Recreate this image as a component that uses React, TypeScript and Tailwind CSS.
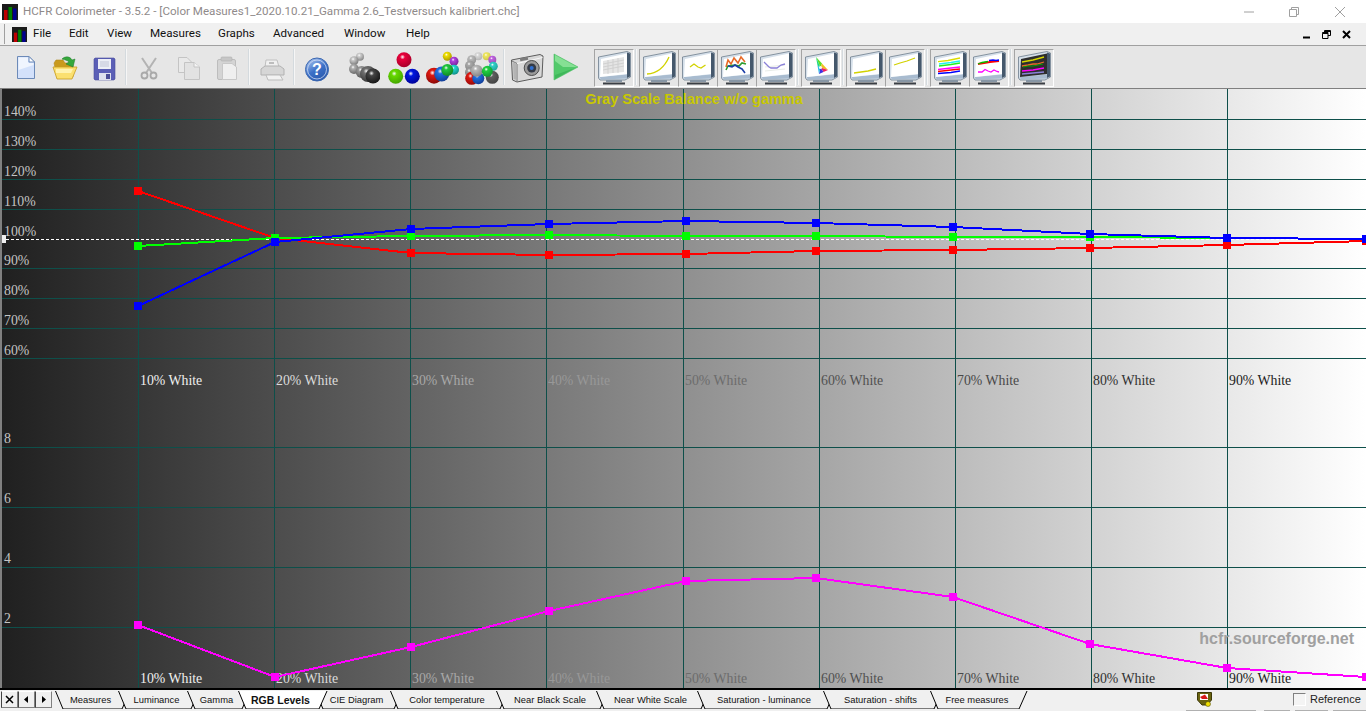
import { useId } from 'react';
import type { ReactNode } from 'react';

const UI_FONT = 'font-["Roboto",sans-serif]';

const menus = [
  { label: 'File', width: 'w-[36px]' },
  { label: 'Edit', width: 'w-[38px]' },
  { label: 'View', width: 'w-[43px]' },
  { label: 'Measures', width: 'w-[68px]' },
  { label: 'Graphs', width: 'w-[55px]' },
  { label: 'Advanced', width: 'w-[71px]' },
  { label: 'Window', width: 'w-[62px]' },
  { label: 'Help', width: 'w-[40px]' },
];

const tabs = [
  { label: 'Measures', width: 'w-[63px]', next: 63 },
  { label: 'Luminance', width: 'w-[69px]', next: 69 },
  { label: 'Gamma', width: 'w-[51px]', next: 51 },
  { label: 'RGB Levels', width: 'w-[77px]', next: 77, active: true },
  { label: 'CIE Diagram', width: 'w-[75px]', next: 75 },
  { label: 'Color temperature', width: 'w-[106px]', next: 106 },
  { label: 'Near Black Scale', width: 'w-[100px]', next: 100 },
  { label: 'Near White Scale', width: 'w-[101px]', next: 101 },
  { label: 'Saturation - luminance', width: 'w-[126px]', next: 126 },
  { label: 'Saturation - shifts', width: 'w-[107px]', next: 107 },
  { label: 'Free measures', width: 'w-[90px]', next: 90, last: true },
];

const gridX = [138, 274, 410, 546, 683, 819, 955, 1091, 1227];
const gridY = [119, 149, 179, 209, 268, 298, 328, 358, 447, 507, 567, 627];
const percent = ['140%', '130%', '120%', '110%', '100%', '90%', '80%', '70%', '60%'];
const percentY = [116, 146, 176, 206, 236, 265, 295, 325, 355];
const whiteColors = ['#f0f0f0', '#dcdcdc', '#a8a8a8', '#989898', '#6c6c6c', '#505050', '#484848', '#303030', '#202020'];
const pointX = [138, 275, 411, 549, 686, 816, 953, 1090, 1227, 1366];

const series = [
  { color: '#ff0000', y: [191, 238, 253, 255, 254, 251, 250, 248, 245, 241] },
  { color: '#00ff00', y: [246, 238, 236, 235, 236, 236, 237, 237, 238, 239] },
  { color: '#0000ff', y: [306, 242, 229, 224, 221, 223, 227, 234, 238, 239] },
  { color: '#ff00ff', y: [625, 677, 647, 611, 581, 578, 597, 644, 668, 677] },
];

function Ball({ x, y, r, color, dark }: { x: number; y: number; r: number; color: string; dark: string }) {
  const id = useId();
  return (
    <>
      <defs>
        <radialGradient id={id} cx="0.4" cy="0.32" r="0.75">
          <stop offset="0" stopColor="#ffffff" stopOpacity="0.9" />
          <stop offset="0.22" stopColor={color} />
          <stop offset="1" stopColor={dark} />
        </radialGradient>
      </defs>
      <circle cx={x} cy={y} r={r} fill={`url(#${id})`} />
    </>
  );
}

const Icon = ({ children }: { children: ReactNode }) => (
  <svg width="36" height="36" viewBox="0 0 36 36" className="block">
    {children}
  </svg>
);

const AppLogo = ({ size }: { size: number }) => (
  <svg width={size} height={size} viewBox="0 0 16 16" className="shrink-0">
    <rect width="16" height="16" fill="#1a1a1a" />
    <rect x="2" y="6" width="3.5" height="10" fill="#c00000" />
    <rect x="6.5" y="3" width="3.5" height="13" fill="#008000" />
    <rect x="11" y="4.5" width="3.5" height="11.5" fill="#000090" />
  </svg>
);

const NewIcon = () => (
  <Icon>
    <path d="M9.5 6.5H21L26.5 12V28.5H9.5Z" fill="#d3e1fb" stroke="#6c8ab8" />
    <path d="M10.5 7.5H20L20 13H25.5V15L10.5 20Z" fill="#f0f5fe" />
    <path d="M21 6.5V12H26.5Z" fill="#ffffff" stroke="#6c8ab8" />
  </Icon>
);

const OpenIcon = () => (
  <Icon>
    <path d="M7 13L9 10H16L18 13H26V27H10Z" fill="#c99a1c" stroke="#b08a20" strokeWidth="0.6" />
    <path d="M6 17H25L30 17L25 29H10Z" fill="#fbe070" stroke="#c89c20" strokeWidth="0.8" />
    <path d="M9 19H26L24 23H9Z" fill="#fff3b0" />
    <path d="M15 9C18 6 23 6 25 10L28 9L26 17L19 14L22 12C20 10 18 10 15 9Z" fill="#35a83c" stroke="#1d7a2a" strokeWidth="0.5" />
  </Icon>
);

const SaveIcon = () => (
  <Icon>
    <path d="M8 9L9 8H28L29 9V29L28 30H9L8 29Z" fill="#5b5fb6" stroke="#4a4e9e" strokeWidth="0.6" />
    <rect x="12" y="9" width="13" height="10" fill="#eceef6" />
    <path d="M14 12H23M14 14H23M14 16H23" stroke="#b6b9cf" strokeWidth="0.8" />
    <rect x="13" y="23" width="12" height="7" fill="#dfe2ee" />
    <rect x="20" y="24" width="4" height="5" fill="#4c4f96" />
  </Icon>
);

const CutIcon = () => (
  <Icon>
    <path d="M11 8L21 23M25 8L15 23" stroke="#b3b3b3" strokeWidth="2" fill="none" />
    <circle cx="13.5" cy="25.5" r="3" fill="none" stroke="#a9a9a9" strokeWidth="1.8" />
    <circle cx="22.5" cy="25.5" r="3" fill="none" stroke="#a9a9a9" strokeWidth="1.8" />
  </Icon>
);

const CopyIcon = () => (
  <Icon>
    <path d="M8.5 7.5H17L21.5 12V22.5H8.5Z" fill="#e9e9e9" stroke="#c4c4c4" />
    <path d="M14.5 12.5H24L29.5 17V29.5H14.5Z" fill="#e2e2e2" stroke="#c4c4c4" />
    <path d="M24 12.5V17H29.5" fill="#f4f4f4" stroke="#c4c4c4" />
  </Icon>
);

const PasteIcon = () => (
  <Icon>
    <rect x="8.5" y="9.5" width="18" height="20" rx="1.5" fill="#d4d4d4" stroke="#bdbdbd" />
    <rect x="12" y="7" width="11" height="4" rx="1" fill="#c6c6c6" stroke="#b0b0b0" strokeWidth="0.6" />
    <path d="M13.5 13.5H23L27.5 17V29.5H13.5Z" fill="#efefef" stroke="#c8c8c8" />
  </Icon>
);

const PrintIcon = () => (
  <Icon>
    <path d="M12 10H23L25 17H11Z" fill="#f0f0f0" stroke="#c0c0c0" />
    <path d="M7 19L11 16H26L30 19V25H7Z" fill="#d6d6d6" stroke="#b2b2b2" />
    <path d="M12 25H26L29 30H14Z" fill="#f2f2f2" stroke="#bcbcbc" />
    <rect x="15" y="12" width="5" height="2" fill="#bdbdbd" />
  </Icon>
);

const HelpIcon = () => {
  const id = useId();
  return (
    <Icon>
      <defs>
        <linearGradient id={id} x1="0.2" y1="0" x2="0.8" y2="1">
          <stop offset="0" stopColor="#a9c4ee" />
          <stop offset="0.5" stopColor="#3b70c8" />
          <stop offset="1" stopColor="#2856a8" />
        </linearGradient>
      </defs>
      <circle cx="18" cy="19.5" r="11.5" fill={`url(#${id})`} stroke="#3d68b0" />
      <circle cx="18" cy="19.5" r="9.5" fill="none" stroke="#cfdcf4" strokeWidth="0.8" />
      <text x="18" y="25" textAnchor="middle" fontSize="16" fontWeight="700" fill="#ffffff" fontFamily="Liberation Sans, sans-serif">
        ?
      </text>
    </Icon>
  );
};

const GrayChain = () => (
  <Icon>
    <Ball x={16} y={6.7} r={4} color="#d0d0d0" dark="#808080" />
    <Ball x={10} y={10.7} r={4.5} color="#c8c8c8" dark="#707070" />
    <Ball x={10} y={19} r={5} color="#b0b0b0" dark="#606060" />
    <Ball x={17.7} y={22} r={6} color="#999999" dark="#505050" />
    <Ball x={24} y={24} r={8} color="#707070" dark="#303030" />
    <Ball x={29} y={26} r={7.5} color="#444444" dark="#111111" />
  </Icon>
);

const RgbBalls = () => (
  <Icon>
    <Ball x={18} y={9.7} r={7.5} color="#e8003a" dark="#a00028" />
    <Ball x={9.7} y={26.3} r={7.5} color="#66d800" dark="#40a000" />
    <Ball x={26.3} y={26.3} r={7.5} color="#0018e0" dark="#000090" />
  </Icon>
);

const ColorChain = () => (
  <Icon>
    <Ball x={22.3} y={6.3} r={4.5} color="#f0e000" dark="#a09000" />
    <Ball x={29} y={11.3} r={4.5} color="#b040e0" dark="#702090" />
    <Ball x={29} y={19.7} r={5} color="#20d8d0" dark="#108880" />
    <Ball x={9} y={25.7} r={8} color="#e01810" dark="#800808" />
    <Ball x={16.7} y={24} r={7.5} color="#2070e0" dark="#103890" />
    <Ball x={22.3} y={20} r={6} color="#20c840" dark="#108020" />
  </Icon>
);

const RingBalls = () => (
  <Icon>
    <Ball x={14.3} y={6.3} r={4} color="#d8d8d8" dark="#b0b0b0" />
    <Ball x={22.7} y={6.3} r={4} color="#f0e860" dark="#c8c050" />
    <Ball x={28.3} y={9.7} r={4} color="#c060e0" dark="#9050b0" />
    <Ball x={29.3} y={16.3} r={4.5} color="#30d0c8" dark="#20a098" />
    <Ball x={7.7} y={9.7} r={4.5} color="#b8b8b8" dark="#909090" />
    <Ball x={6} y={15.7} r={5} color="#a8a8a8" dark="#808080" />
    <Ball x={6} y={22.3} r={5} color="#a0a0a0" dark="#707070" />
    <Ball x={7.7} y={28.3} r={6.5} color="#e01810" dark="#900808" />
    <Ball x={28.3} y={27.3} r={6.5} color="#606060" dark="#404040" />
    <Ball x={14.3} y={28.3} r={6} color="#2070e0" dark="#103890" />
    <Ball x={12.7} y={20.7} r={6} color="#b8b8b8" dark="#808080" />
    <Ball x={23.3} y={21.3} r={5.5} color="#20d040" dark="#109030" />
  </Icon>
);

const CameraIcon = () => (
  <Icon>
    <path d="M2.5 10L31 4.5L34 6L33 27L8 32L3.5 30Z" fill="#d8d8d8" stroke="#5c5c5c" />
    <path d="M3 11L8 13.5V31.5" fill="none" stroke="#7a7a7a" />
    <path d="M8 13.5L33.5 7.5" stroke="#f8f8f8" />
    <path d="M4 12L7.5 14V30L4.5 29Z" fill="#b4b4b4" />
    <rect x="11" y="7.5" width="8" height="3" fill="#7c7c7c" transform="rotate(-12 15 9)" />
    <circle cx="22.7" cy="18" r="7.5" fill="#9a9a9a" stroke="#4c4c4c" />
    <circle cx="22.7" cy="18" r="4.5" fill="#343a46" />
    <circle cx="22.7" cy="18" r="2" fill="#2f6fd0" />
  </Icon>
);

const PlayIcon = () => (
  <Icon>
    <path d="M5 4L29 17L5 30Z" fill="#52c96a" stroke="#4cbd64" strokeWidth="0.6" />
    <path d="M6 5L28 17H14L6 11Z" fill="#86e094" />
    <path d="M6 25L26 18L6 29Z" fill="#3fb75a" />
  </Icon>
);

const Monitor = ({ children, dark }: { children?: ReactNode; dark?: boolean }) => (
  <svg width="38" height="38" viewBox="0 0 38 38" className="block">
    <path d="M3.5 8L32 2.5L35.5 4V28L30 31H5L3.5 29Z" fill="#d6e0ea" stroke="#6d7d8d" strokeWidth="0.8" />
    <path d="M32 3.5L35 4.5V27.5L32 29Z" fill="#45586c" />
    <path d="M4.5 28L32 25.5V29.5L6 30.5Z" fill="#a8bbcf" />
    <path d="M11 31H27V33H11Z" fill="#8796a5" />
    <path d="M8 33.5H30V35.5H8Z" fill="#3b3f44" />
    <path d="M6 10L32 4.5V25L5 28Z" fill={dark ? '#2e2e2e' : '#ffffff'} />
    {children}
  </svg>
);

const Line = ({ d, c, w = 1.3 }: { d: string; c: string; w?: number }) => (
  <path d={d} stroke={c} strokeWidth={w} fill="none" />
);

const monitorContent: ReactNode[] = [
  <>
    <path d="M8 12L29 8V23L8 25Z" fill="#e4e4e4" />
    <path d="M8 15L29 11M8 18L29 14M8 21L29 17M13 11V25M18 10V24M23 9V24" stroke="#c8c8c8" strokeWidth="0.7" />
  </>,
  <Line d="M7 25Q22 24 29 8" c="#d2d200" />,
  <Line d="M11 18L15 15L19 18L22 19L26.5 16" c="#d2d200" />,
  <>
    <Line d="M8 18L10 11L13 15L16 9L20 14L23 8L27 13" c="#e86a28" w={1.6} />
    <Line d="M8 21L10 17L17 16L21 17L24 14L28 15" c="#2f9a30" w={1.6} />
    <Line d="M10 17L14 18L17 16L20 18L24 20L27 24" c="#1d3fa8" w={1.6} />
  </>,
  <>
    <path d="M8 22L28 20M8 18L28 16" stroke="#dce2dc" strokeWidth="0.7" />
    <Line d="M7 13L12 18L14 19L20 19L24 16L28 15" c="#8a80d8" />
  </>,
  <>
    <path d="M14 8L20 14.5L18.5 18.5Z" fill="#60e020" />
    <path d="M20 14.5L26 21L18.5 18.5Z" fill="#f0c020" />
    <path d="M26 21L21.5 23L18.5 18.5Z" fill="#f02060" />
    <path d="M21.5 23L17 25L18.5 18.5Z" fill="#4030e0" />
    <path d="M17 25L15.5 16.5L18.5 18.5Z" fill="#20b8e8" />
    <path d="M15.5 16.5L14 8L18.5 18.5Z" fill="#20d880" />
    <circle cx="18.5" cy="18.5" r="1.6" fill="#f4f4f4" />
  </>,
  <Line d="M7 24L14 23L21 22L29 20" c="#d2d200" />,
  <Line d="M8 16L14 14L21 12L29 9" c="#d2d200" />,
  <>
    <Line d="M7 12.7L17 11.5L29 9" c="#dcdc00" />
    <Line d="M8 15L20 13.5L29 12" c="#20f0f0" />
    <Line d="M8 17L20 15.5L29 14" c="#20f020" />
    <Line d="M7 20.5L20 19L29 18" c="#ff00ff" />
    <Line d="M7 22.5L20 21L29 20" c="#ff0000" />
    <Line d="M7 24.5L20 23.5L29 22" c="#0000ff" />
  </>,
  <>
    <Line d="M8 15L14 14L20 13L29 12" c="#ff0000" w={2} />
    <Line d="M8 15L12 13.5L15 13L18 12.5" c="#00c000" />
    <Line d="M19 11.5L23 11L26 11.5L29 11" c="#0000ff" />
    <Line d="M8 23L12 23L15 20.5L18 22L21 23L24 21L27 22.5L29 23" c="#ff00ff" />
  </>,
  <>
    <Line d="M7 13L18 11L29 8" c="#d8d800" />
    <Line d="M7 17L13 16L18 15L22 15L29 13" c="#e86a28" />
    <Line d="M8 18L13 17L18 17L23 16L28 15" c="#00a000" w={1} />
    <Line d="M7 22L18 21L29 19" c="#ff00ff" />
    <Line d="M7 25L18 24L29 23" c="#8a80d8" />
  </>,
];

const ToolSep = () => (
  <div className="flex w-[6px] h-[38px] justify-center">
    <div className="w-[2px] h-[36px] bg-[#d4dade] border-r border-[#f6f6f6]" />
  </div>
);

const Tool = ({ children, className = '' }: { children: ReactNode; className?: string }) => (
  <div className={`flex w-[39px] h-[38px] items-center justify-center ${className}`}>{children}</div>
);

const MonitorButton = ({ index, dark }: { index: number; dark?: boolean }) => (
  <div className="flex w-[39px] h-[38px] pr-px">
    <div className="flex flex-1 items-center justify-center border-t border-l border-r border-b border-t-[#a4a4a4] border-l-[#a4a4a4] border-r-white border-b-white">
      <Monitor dark={dark}>{monitorContent[index]}</Monitor>
    </div>
  </div>
);

function Chart() {
  return (
    <div className="relative flex-1 min-h-0 bg-linear-to-r/srgb from-[#202020] to-white border-l-2 border-[#808080]">
      <svg
        width="1366"
        height="599"
        viewBox="0 89 1366 599"
        className="absolute -left-[2px] top-0 block"
        fontFamily="Liberation Serif, serif"
        fontSize="13.8"
      >
        <g shapeRendering="crispEdges" stroke="#0e4f4a" strokeWidth="1">
          {gridX.map(x => (
            <line key={x} x1={x + 0.5} y1={89} x2={x + 0.5} y2={688} />
          ))}
          {gridY.map(y => (
            <line key={y} x1={2} y1={y + 0.5} x2={1366} y2={y + 0.5} />
          ))}
        </g>
        <line x1={6} y1={239.5} x2={1366} y2={239.5} stroke="#ffffff" strokeDasharray="3 2" shapeRendering="crispEdges" />
        <rect x={2} y={235} width={4} height={8} fill="#f0f0f0" />
        {percent.map((p, i) => (
          <text key={p} x={4} y={percentY[i]} fill="#c4c4c4">
            {p}
          </text>
        ))}
        {['8', '6', '4', '2'].map((n, i) => (
          <text key={n} x={4} y={443 + i * 60} fill="#c4c4c4">
            {n}
          </text>
        ))}
        {gridX.map((x, i) => (
          <text key={x} x={x + 2} y={385} fill={whiteColors[i]}>
            {i + 1}0% White
          </text>
        ))}
        {gridX.map((x, i) => (
          <text key={x} x={x + 2} y={683} fill={whiteColors[i]}>
            {i + 1}0% White
          </text>
        ))}
        <text x={694} y={104} textAnchor="middle" fontFamily="Liberation Sans, sans-serif" fontWeight="700" fontSize="14.5" fill="#c8c800">
          Gray Scale Balance w/o gamma
        </text>
        <text x={1354} y={644} textAnchor="end" fontFamily="Liberation Sans, sans-serif" fontWeight="700" fontSize="16" fill="#a0a0a0">
          hcfr.sourceforge.net
        </text>
        {series.map(s => (
          <g key={s.color} shapeRendering="crispEdges">
            <polyline points={s.y.map((y, i) => `${pointX[i]},${y}`).join(' ')} fill="none" stroke={s.color} strokeWidth="2" />
            {s.y.map((y, i) => (
              <rect key={i} x={pointX[i] - 4} y={y - 4} width={8} height={8} fill={s.color} />
            ))}
          </g>
        ))}
      </svg>
    </div>
  );
}

const NavButton = ({ children }: { children: ReactNode }) => (
  <div className="flex w-[17px] h-[17px] items-center justify-center border border-t-white border-l-[#444444] border-r-[#808080] border-b-[#808080] bg-[#f0f0f0]">
    {children}
  </div>
);

const Tab = ({ label, width, next, active, last }: (typeof tabs)[number]) => {
  const bottomRight = last ? next - 1 : next + 4;
  const topRight = last ? next + 7 : next + 12;
  return (
    <div className={`relative h-[18px] shrink-0 ${width} ${active ? 'z-10' : ''}`}>
      <svg width={next + 14} height="19" viewBox={`0 0 ${next + 14} 19`} className="absolute left-0 top-0 block">
        <path d={`M0.5 0L8 17.5H${bottomRight}L${topRight} 0Z`} fill={active ? '#ffffff' : '#f0f0f0'} stroke="none" />
        <path d={`M8 17.5H${bottomRight}`} stroke="#7a7a7a" />
        <path d="M0.5 0L8 18" stroke="#000000" />
        <path d={`M${bottomRight} 18L${topRight} 0`} stroke="#000000" />
      </svg>
      <span
        className={`absolute inset-x-0 top-[2px] pl-[8px] text-center whitespace-nowrap leading-[14px] text-[#111111] ${active ? 'font-bold text-[10.5px]' : 'text-[9.4px]'} ${last ? 'pr-[4px]' : ''}`}
      >
        {label}
      </span>
    </div>
  );
};

export default function App() {
  return (
    <div className={`flex flex-col w-[1366px] h-[711px] overflow-hidden bg-[#f0f0f0] ${UI_FONT}`}>
      {/* title bar */}
      <div className="flex items-center h-[23px] shrink-0 bg-white pl-[2px]">
        <AppLogo size={16} />
        <span className="ml-[5px] text-[11.6px] text-[#8f8a8a] whitespace-nowrap">
          HCFR Colorimeter - 3.5.2 - [Color Measures1_2020.10.21_Gamma 2.6_Testversuch kalibriert.chc]
        </span>
        <div className="ml-auto flex items-center text-[#a0a0a0]">
          <svg width="10" height="10" viewBox="0 0 10 10" className="mr-[35px]">
            <path d="M0 5H10" stroke="#a0a0a0" />
          </svg>
          <svg width="10" height="10" viewBox="0 0 10 10" className="mr-[36px]">
            <path d="M0.5 2.5H7.5V9.5H0.5ZM2.5 2.5V0.5H9.5V7.5H7.5" fill="none" stroke="#a0a0a0" />
          </svg>
          <svg width="10" height="10" viewBox="0 0 10 10" className="mr-[21px]">
            <path d="M0 0L10 10M10 0L0 10" stroke="#a0a0a0" />
          </svg>
        </div>
      </div>

      {/* menu bar */}
      <div className="flex items-center h-[22px] shrink-0 bg-[#f0f0f0] pl-[4px]">
        <div className="w-[2px] h-[20px] border-l border-[#a0a0a0] mr-[6px]" />
        <AppLogo size={15} />
        <span className="w-[6px]" />
        {menus.map(m => (
          <span key={m.label} className={`${m.width} text-[11.6px] text-[#111111] whitespace-nowrap`}>
            {m.label}
          </span>
        ))}
        <div className="ml-auto flex items-center mr-[15px] gap-[11px]">
          <svg width="9" height="9" viewBox="0 0 9 9">
            <path d="M1 7.5H8" stroke="#000000" strokeWidth="2" />
          </svg>
          <svg width="9" height="9" viewBox="0 0 9 9">
            <path d="M0.5 3.5H6V8.5H0.5ZM0.5 3.5V2.5H6V3.5M2.5 2.5V0.5H8.5V5.5H6M2.5 1.5H8.5" fill="none" stroke="#000000" />
          </svg>
          <svg width="9" height="9" viewBox="0 0 9 9">
            <path d="M1 1L8 8M8 1L1 8" stroke="#000000" strokeWidth="2" />
          </svg>
        </div>
      </div>
      <div className="h-px shrink-0 bg-[#a0a0a0]" />

      {/* toolbar */}
      <div className="flex items-start h-[42px] shrink-0 pt-[3px] pl-[6px] bg-[#e6e6e6]">
        <Tool><NewIcon /></Tool>
        <Tool><OpenIcon /></Tool>
        <Tool><SaveIcon /></Tool>
        <ToolSep />
        <Tool><CutIcon /></Tool>
        <Tool><CopyIcon /></Tool>
        <Tool><PasteIcon /></Tool>
        <ToolSep />
        <Tool><PrintIcon /></Tool>
        <ToolSep />
        <Tool><HelpIcon /></Tool>
        <Tool className="ml-[6px]"><GrayChain /></Tool>
        <Tool className="ml-[3px]"><RgbBalls /></Tool>
        <Tool><ColorChain /></Tool>
        <Tool><RingBalls /></Tool>
        <ToolSep />
        <Tool><CameraIcon /></Tool>
        <Tool className="ml-[1px]"><PlayIcon /></Tool>
        <div className="w-[8px]" />
        <MonitorButton index={0} />
        <ToolSep />
        <MonitorButton index={1} />
        <MonitorButton index={2} />
        <MonitorButton index={3} />
        <MonitorButton index={4} />
        <ToolSep />
        <MonitorButton index={5} />
        <ToolSep />
        <MonitorButton index={6} />
        <MonitorButton index={7} />
        <ToolSep />
        <MonitorButton index={8} />
        <MonitorButton index={9} />
        <ToolSep />
        <MonitorButton index={10} dark />
      </div>
      <div className="h-px shrink-0 bg-[#808080]" />

      <Chart />

      {/* tab strip */}
      <div className="h-[2px] shrink-0 bg-black" />
      <div className="flex h-[21px] shrink-0 items-start pt-px pl-[1px] bg-[#f0f0f0] font-['Liberation_Sans',sans-serif]">
        <NavButton>
          <svg width="9" height="9" viewBox="0 0 9 9">
            <path d="M1 1L8 8M8 1L1 8" stroke="#000000" strokeWidth="1.5" />
          </svg>
        </NavButton>
        <NavButton>
          <svg width="9" height="9" viewBox="0 0 9 9">
            <path d="M6 1V8L2 4.5Z" fill="#000000" />
          </svg>
        </NavButton>
        <NavButton>
          <svg width="9" height="9" viewBox="0 0 9 9">
            <path d="M3 1V8L7 4.5Z" fill="#000000" />
          </svg>
        </NavButton>
        <div className="flex ml-[3px]">
          {tabs.map(t => (
            <Tab key={t.label} {...t} />
          ))}
        </div>
        <svg width="15" height="15" viewBox="0 0 15 15" className="ml-[177px] mt-[1px] shrink-0">
          <path d="M0.5 0.5H14.5V8L10 13H5L0.5 8Z" fill="#6a6410" stroke="#3c3808" />
          <rect x="3" y="2" width="8" height="6" fill="#ffffff" />
          <path d="M3 5L8 2.5L11 7L5 7Z" fill="#d81818" />
          <circle cx="11" cy="12" r="2.5" fill="#f0e000" stroke="#3c3808" strokeWidth="0.5" />
        </svg>
        <div className="ml-[81px] mt-[2px] w-[13px] h-[13px] shrink-0 border border-t-[#808080] border-l-[#808080] border-r-white border-b-white bg-[#f4f4f4]" />
        <span className="ml-[4px] text-[11px] leading-[16px] text-[#222222] whitespace-nowrap">Reference</span>
      </div>
      <div className="flex h-px shrink-0 -mt-px bg-[#f0f0f0] justify-end gap-[5px]">
        <div className="w-[70px] bg-[#b0b0b0] mr-[3px]" />
        <div className="w-[26px] bg-[#b0b0b0]" />
        <div className="w-[33px] bg-[#b0b0b0]" />
        <div className="w-[33px] bg-[#b0b0b0]" />
      </div>
    </div>
  );
}
